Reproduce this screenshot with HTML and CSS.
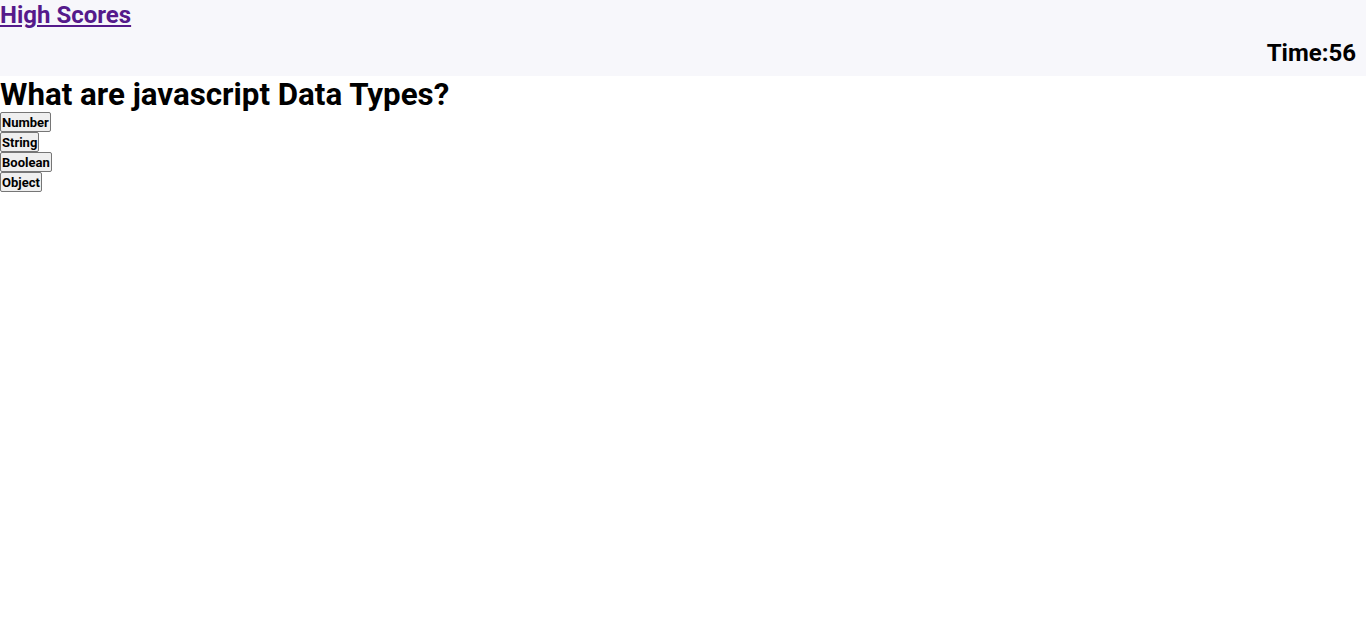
FILE: index.html
```html
<!DOCTYPE html>
<html>
<head>
<meta charset="utf-8">
<link rel="stylesheet" href="styles.css">
</head>
<body>
<header class="top">
  <a class="scores" href="#">High Scores</a>
  <div class="timer">Time:56</div>
</header>
<main class="quiz">
  <h1 class="question">What are javascript Data Types?</h1>
  <div class="answers">
    <button class="answer">Number</button>
    <button class="answer">String</button>
    <button class="answer">Boolean</button>
    <button class="answer">Object</button>
  </div>
</main>
</body>
</html>
```
FILE: styles.css
```css
body {
  margin: 0;
  font-family: "Roboto", sans-serif;
  background: #ffffff;
  color: #000;
}
.top {
  background: #f7f7fb;
  height: 76px;
  display: flex;
  flex-direction: column;
}
.scores {
  color: #551a8b;
  font-size: 24px;
  font-weight: bold;
  line-height: 30px;
  align-self: flex-start;
}
.timer {
  font-size: 24px;
  font-weight: bold;
  text-align: right;
  padding-right: 10px;
  margin-top: 8px;
  line-height: 30px;
}
.question {
  margin: 0;
  padding-top: 2px;
  font-size: 31.3px;
  line-height: 34px;
}
.answers {
  display: flex;
  flex-direction: column;
  align-items: flex-start;
}
.answer {
  font-family: "Roboto", sans-serif;
  font-weight: bold;
  font-size: 13px;
  padding: 1px 1px;
  height: 20px;
  background: #efefef;
  border: 1px solid #767676;
  border-radius: 2px;
}
```
